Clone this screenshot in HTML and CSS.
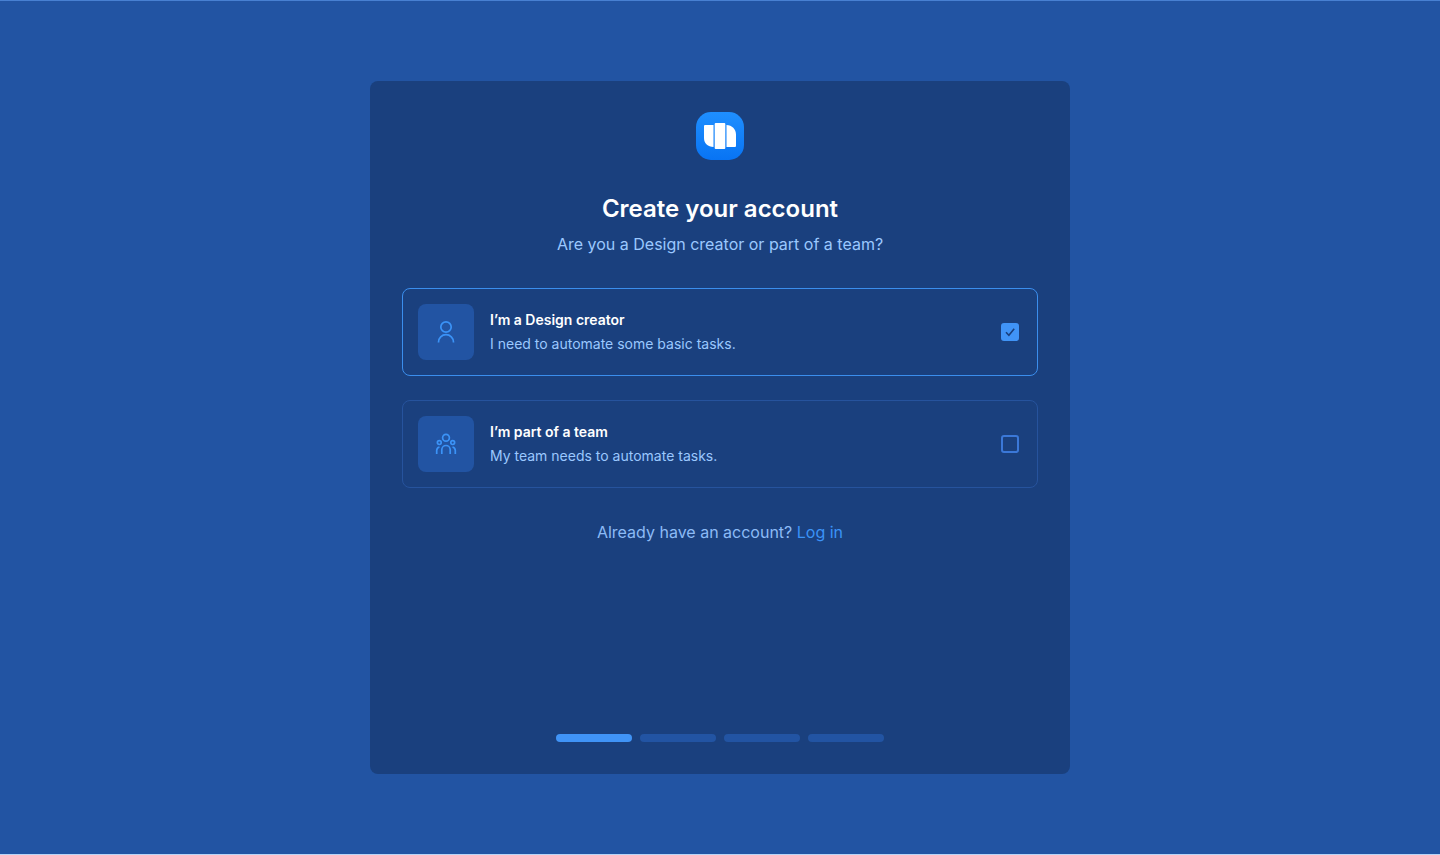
FILE: index.html
```html
<!DOCTYPE html>
<html lang="en">
<head>
<meta charset="utf-8">
<meta name="viewport" content="width=device-width, initial-scale=1">
<title>Create your account</title>
<link rel="stylesheet" href="styles.css">
</head>
<body>
<main class="page">
  <form class="card">
    <svg class="logo" viewBox="0 0 48 48" aria-hidden="true">
      <defs><linearGradient id="logo-fill" x1="0" y1="0" x2="0" y2="1"><stop offset="0" stop-color="#1f8fff"/><stop offset="1" stop-color="#0874f4"/></linearGradient></defs>
      <rect width="48" height="48" rx="15" fill="url(#logo-fill)"/>
      <path fill="#fff" d="M9 13h8.500v22C12 34.800 8 31.500 8 26V14a1 1 0 0 1 1-1zM19.700 11h8.600a1 1 0 0 1 1 1v24a1 1 0 0 1-1 1h-8.600a1 1 0 0 1-1-1V12a1 1 0 0 1 1-1zM30.500 13C36 13.200 40 17 40 22.500V34a1 1 0 0 1-1 1h-8.500z"/>
    </svg>
    <h1 class="title">Create your account</h1>
    <p class="subtitle" id="question">Are you a Design creator or part of a team?</p>
    <div class="options" role="group" aria-labelledby="question">
      <label class="option" for="creator">
        <span class="tile">
          <svg class="icon" viewBox="0 0 24 24" aria-hidden="true"><circle cx="12" cy="7" r="5.200"/><path d="M4.500 22.500v-.3a7.500 7.500 0 0 1 15 0v.3"/></svg>
        </span>
        <span class="copy"><span class="name">I’m a Design creator</span><span class="detail">I need to automate some basic tasks.</span></span>
        <input class="check" type="checkbox" id="creator" name="creator" checked>
        <svg class="box" viewBox="0 0 18 18" aria-hidden="true"><rect class="frame" x="1" y="1" width="16" height="16" rx="2"/><path class="tick" d="M5 9.300l2.900 2.900 5.300-6.400"/></svg>
      </label>
      <label class="option" for="team">
        <span class="tile">
          <svg class="icon" viewBox="0 0 24 24" aria-hidden="true"><circle cx="12" cy="5.700" r="3.400"/><circle cx="5.300" cy="10.600" r="1.900"/><circle cx="18.700" cy="10.600" r="1.900"/><path d="M7.800 22v-4.300a4.200 4.200 0 0 1 8.400 0V22M2.700 22v-3.500A3.700 3.700 0 0 1 5.500 15M21.300 22v-3.500a3.700 3.700 0 0 0-2.800-3.500"/></svg>
        </span>
        <span class="copy"><span class="name">I’m part of a team</span><span class="detail">My team needs to automate tasks.</span></span>
        <input class="check" type="checkbox" id="team" name="team">
        <svg class="box" viewBox="0 0 18 18" aria-hidden="true"><rect class="frame" x="1" y="1" width="16" height="16" rx="2"/><path class="tick" d="M5 9.300l2.900 2.900 5.300-6.400"/></svg>
      </label>
    </div>
    <p class="login">Already have an account? <a href="#login">Log in</a></p>
    <div class="steps" role="img" aria-label="Step 1 of 4">
      <span class="step current"></span><span class="step"></span><span class="step"></span><span class="step"></span>
    </div>
  </form>
</main>
</body>
</html>
```

FILE: styles.css
```css
*, *::before, *::after { box-sizing: border-box; }

body {
  margin: 0;
  background: #2254a3;
  font-family: Inter, "Liberation Sans", sans-serif;
  color: #fff;
}

.page {
  display: flex;
  justify-content: center;
  min-height: 100vh;
  padding: 80px 24px;
  border-top: 1px solid #4880d2;
  border-bottom: 1px solid #b9d5f7;
}

.card {
  display: flex;
  flex-direction: column;
  align-items: center;
  width: 100%;
  max-width: 700px;
  padding: 31px 32px 32px;
  border-radius: 8px;
  background: #1a407e;
}

.logo { width: 48px; height: 48px; }

.title {
  margin: 32px 0 0;
  font-size: 24px;
  font-weight: 600;
  line-height: 34px;
}

.subtitle, .login {
  margin: 6px 0 0;
  font-size: 16px;
  line-height: 24px;
  color: #9bc8ff;
}

.options {
  display: grid;
  gap: 24px;
  width: 100%;
  margin-top: 32px;
}

.option {
  display: flex;
  align-items: center;
  gap: 16px;
  min-height: 88px;
  padding: 15px;
  padding-right: 18px;
  border: 1px solid #26539d;
  border-radius: 8px;
  cursor: pointer;
}

.option:has(.check:checked) { border-color: #3b8eed; }

.tile {
  display: grid;
  place-items: center;
  width: 56px;
  height: 56px;
  border-radius: 8px;
  background: #2254a3;
}

.icon {
  width: 24px;
  height: 24px;
  fill: none;
  stroke: #3b93f7;
  stroke-width: 1.7;
}

.copy { flex: 1; display: grid; }

.name, .detail { font-size: 14px; line-height: 24px; }
.name { font-weight: 600; }
.detail { color: #9bc8ff; }

.check {
  position: absolute;
  opacity: 0;
}

.box { width: 18px; height: 18px; }
.frame { fill: none; stroke: #3b78d8; stroke-width: 2; }
.tick { display: none; fill: none; stroke: #1a407e; stroke-width: 1.6; }
.check:checked + .box .frame { fill: #4094f7; stroke: #4094f7; }
.check:checked + .box .tick { display: block; }
.check:focus-visible + .box { outline: 2px solid #9bc8ff; }

.login { margin-top: 32px; color: #8cbbf6; }
.login a { color: #3b93f7; text-decoration: none; }

.steps {
  display: grid;
  grid-template-columns: repeat(4, 1fr);
  gap: 8px;
  width: 100%;
  max-width: 328px;
  margin-top: auto;
}

.step { height: 8px; border-radius: 4px; background: #2254a3; }
.step.current { background: #4094f7; }
```
